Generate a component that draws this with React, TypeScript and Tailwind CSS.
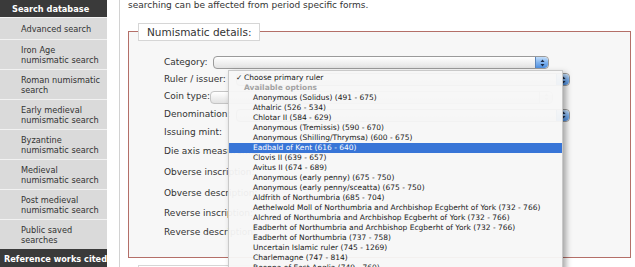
import React from "react";

const sideItems = [
  ["Iron Age", "numismatic search"],
  ["Roman numismatic", "search"],
  ["Early medieval", "numismatic search"],
  ["Byzantine", "numismatic search"],
  ["Medieval", "numismatic search"],
  ["Post medieval", "numismatic search"],
  ["Public saved", "searches"],
];

const rulers = [
  "Anonymous (Solidus) (491 - 675)",
  "Athalric (526 - 534)",
  "Chlotar II (584 - 629)",
  "Anonymous (Tremissis) (590 - 670)",
  "Anonymous (Shilling/Thrymsa) (600 - 675)",
  "Eadbald of Kent (616 - 640)",
  "Clovis II (639 - 657)",
  "Avitus II (674 - 689)",
  "Anonymous (early penny) (675 - 750)",
  "Anonymous (early penny/sceatta) (675 - 750)",
  "Aldfrith of Northumbria (685 - 704)",
  "Aethelwold Moll of Northumbria and Archbishop Ecgberht of York (732 - 766)",
  "Alchred of Northumbria and Archbishop Ecgberht of York (732 - 766)",
  "Eadberht of Northumbria and Archbishop Ecgberht of York (732 - 766)",
  "Eadberht of Northumbria (737 - 758)",
  "Uncertain Islamic ruler (745 - 1269)",
  "Charlemagne (747 - 814)",
  "Beonna of East Anglia (749 - 760)",
];

function Sidebar() {
  return (
    <div className="w-[107px] shrink-0 bg-[#dadada] text-[8.2px] leading-[10px] text-[#333]">
      <div className="flex h-[17px] items-center bg-[#3a3a3a] pl-[12px] font-bold text-white">
        Search database
      </div>
      <div className="flex h-[22px] items-center border-t border-[#f2f2f2] pl-[21px]">
        Advanced search
      </div>
      {sideItems.map(([a, b]) => (
        <div
          key={a}
          className="flex h-[30px] flex-col justify-center border-t border-[#f2f2f2] pl-[21px]"
        >
          <span>{a}</span>
          <span>{b}</span>
        </div>
      ))}
      <div className="flex h-[20px] items-center whitespace-nowrap bg-[#3a3a3a] pl-[4px] font-bold text-white">
        Reference works cited
      </div>
    </div>
  );
}

function Stepper({ disabled }: { disabled?: boolean }) {
  return (
    <div
      className={
        disabled
          ? "flex h-full w-[13px] items-center justify-center rounded-r-[4px] border-l border-[#bbb] bg-linear-to-b from-[#f4f4f4] to-[#dcdcdc]"
          : "flex h-full w-[13px] items-center justify-center rounded-r-[4px] border-l border-[#5b84b8] bg-linear-to-b from-[#c3defa] via-[#7fb2ee] to-[#4d8fe0]"
      }
    >
      <svg width="5" height="8" viewBox="0 0 5 8">
        <path d="M2.5 0.5 L4.5 3 L0.5 3 Z" fill={disabled ? "#bbb" : "#1c2a44"} />
        <path d="M2.5 7.5 L4.5 5 L0.5 5 Z" fill={disabled ? "#bbb" : "#1c2a44"} />
      </svg>
    </div>
  );
}

function AquaSelect({ className, disabled }: { className: string; disabled?: boolean }) {
  return (
    <div
      className={
        "flex h-[13px] shrink-0 justify-end overflow-hidden rounded-[4px] border bg-linear-to-b from-white to-[#e2e2e2] " +
        (disabled ? "border-[#c4c4c4] " : "border-[#9a9a9a] ") +
        className
      }
    >
      <Stepper disabled={disabled} />
    </div>
  );
}

function Fieldset() {
  return (
    <div className="mt-[20px] h-[227px] border border-[#b46f68] bg-[#f7f7f7]">
      <div className="-mt-[9px] ml-[9px] h-[18px] w-fit border border-[#d6d6d6] bg-white px-[8px] text-[10.5px] leading-[16px] text-[#333]">
        Numismatic details:
      </div>
      <div className="mt-[13px] whitespace-nowrap pl-[35px] text-[9px] text-[#333]">
        <div className="flex h-[17px] items-center">
          <span className="w-[49px] shrink-0">Category:</span>
          <AquaSelect className="w-[336px]" />
        </div>
        <div className="flex h-[17px] items-center">
          <span className="w-[72px] shrink-0">Ruler / issuer:</span>
          <AquaSelect className="w-[334px]" />
        </div>
        <div className="flex h-[18px] items-center">
          <span className="w-[46px] shrink-0">Coin type:</span>
          <AquaSelect className="w-[343px]" disabled />
        </div>
        <div className="flex h-[18px] items-center">
          <span className="w-[72px] shrink-0">Denomination:</span>
          <AquaSelect className="w-[334px]" />
        </div>
        <div className="flex h-[18px] items-center">
          <span>Issuing mint:</span>
        </div>
        <div className="flex h-[20px] items-center">
          <span>Die axis measurement:</span>
        </div>
        <div className="flex h-[22px] items-center">
          <span>Obverse inscription:</span>
        </div>
        <div className="flex h-[20px] items-center">
          <span>Obverse description:</span>
        </div>
        <div className="flex h-[19px] items-center">
          <span>Reverse inscription:</span>
        </div>
        <div className="flex h-[20px] items-center">
          <span>Reverse description:</span>
        </div>
      </div>
    </div>
  );
}

function RulerMenu() {
  return (
    <div className="absolute left-[228px] top-[70px] h-[205px] w-[335px] overflow-hidden border border-[#c9c9c9] bg-[#f7f7f7]/95 pt-[2px] text-[7.5px] leading-[10px] text-[#1a1a1a] shadow-[3px_3px_6px_rgba(0,0,0,0.35)]">
      <div className="flex h-[10px] items-center whitespace-nowrap pl-[7px]">
        <span className="w-[8px]">✓</span>
        <span>Choose primary ruler</span>
      </div>
      <div className="h-[10px] whitespace-nowrap pl-[15px] font-bold text-[#a3a3a3]">
        Available options
      </div>
      {rulers.map((r) => (
        <div
          key={r}
          className={
            r.startsWith("Eadbald")
              ? "h-[10px] whitespace-nowrap bg-[#3875d7] pl-[24px] text-white"
              : "h-[10px] whitespace-nowrap pl-[24px]"
          }
        >
          {r}
        </div>
      ))}
    </div>
  );
}

export default function App() {
  return (
    <div className="relative flex h-[267px] w-[635px] overflow-hidden bg-white font-['DejaVu_Sans','Lucida_Grande',sans-serif] text-[#333]">
      <Sidebar />
      <div className="ml-[12px] flex-1 border-l border-[#d2d2d2] pl-[8px] pr-[4px]">
        <p className="-mt-[1px] whitespace-nowrap text-[9px] leading-[12px]">
          searching can be affected from period specific forms.
        </p>
        <Fieldset />
        <div className="ml-[10px] mt-[7px] h-[12px] w-[200px] border-l border-t border-[#d6d6d6] bg-white" />
      </div>
      <RulerMenu />
    </div>
  );
}
